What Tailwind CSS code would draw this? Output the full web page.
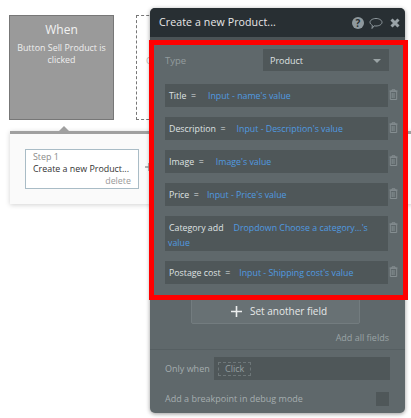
<!DOCTYPE html>
<html><head><meta charset="utf-8">
<script src="https://cdn.jsdelivr.net/npm/@tailwindcss/browser@4"></script>
</head>
<body class="m-0 bg-white">
<div class="relative w-[411px] h-[418px] overflow-hidden bg-white font-['Open_Sans',sans-serif]">
  <!-- dashed placeholder -->
  <div class="absolute left-[136px] top-[15px] w-[105px] h-[105px] border border-dashed border-[#777] text-[9px] leading-[12px] text-[#bbb] pl-[9px] pt-[39px]">C</div>
  <!-- When card -->
  <div class="absolute left-[9px] top-[15px] w-[105px] h-[105px] bg-[#9a9a9a] border border-[#777] flex flex-col items-center">
    <div class="text-[12px] leading-[16px] mt-[6px] text-[#f2f2f2]">When</div>
    <div class="text-[8.9px] leading-[12px] mt-[4px] text-center text-[#eeeeee] w-[100px]">Button Sell Product is clicked</div>
  </div>
  <!-- Step strip -->
  <div class="absolute left-[10px] top-[131px] w-[420px] h-[73px] bg-[#fafafa] border-t-[3px] border-[#a0a0a0] shadow-[0_1px_5px_rgba(0,0,0,0.18)]">
    <div class="ml-[15px] mt-[15px] w-[114px] h-[40px] bg-white border border-[#a9bcc6] px-[7px] flex flex-col text-[8.9px] leading-[12px]">
      <div class="text-[#8a8a8a] mt-[1px]">Step 1</div>
      <div class="text-[#333] whitespace-nowrap">Create a new Product...</div>
      <div class="text-[#999] text-right">delete</div>
    </div>
    <svg class="absolute left-[135px] top-[29px]" width="6" height="8" viewBox="0 0 6 8"><path d="M4 0v8M0 4h6" stroke="#9a9a9a" stroke-width="1.500"/></svg>
  </div>
  <div class="absolute left-[58px] top-[126px] w-0 h-0 border-x-[6px] border-x-transparent border-b-[6px] border-b-[#a0a0a0]"></div>
  <!-- Panel -->
  <div class="absolute left-[150px] top-[8px] w-[255px] h-[405px] rounded-[5px] bg-[#5f686b] shadow-[0_1px_4px_rgba(0,0,0,0.4)] flex flex-col">
    <div class="h-[29px] shrink-0 bg-[#282f33] rounded-t-[5px] flex items-center pl-[9px] pr-[5px]">
      <div class="text-[#e8e8e8] text-[10.6px] tracking-[0.1px] flex-1">Create a new Product...</div>
      <svg width="12" height="12" viewBox="0 0 12 12" class="mr-[5px]"><circle cx="6" cy="6" r="6" fill="#8f999e"/><text x="6" y="9.500" text-anchor="middle" font-size="10" font-weight="700" fill="#282f33" font-family="Open Sans">?</text></svg>
      <svg width="14" height="13" viewBox="0 0 14 13" class="mr-[7px] mt-[2px]"><path d="M7 1.500c3.300 0 6 1.700 6 3.800S10.300 9 7 9c-.6 0-1.200 0-1.800-.2L3 11.500l.4-3.200C1.900 7.600 1 6.500 1 5.300c0-2.100 2.700-3.800 6-3.800z" fill="none" stroke="#8f999e" stroke-width="1"/></svg>
      <svg width="10" height="10" viewBox="0 0 10 10"><path d="M1.500 1.500l7 7M8.500 1.500l-7 7" stroke="#9aa3a8" stroke-width="3"/></svg>
    </div>
    <div class="h-[3px] shrink-0 bg-[#4b5356]"></div>
    <div class="flex-1"></div>
    <div class="shrink-0">
      <div class="ml-[41px] mr-[45px] h-[26px] mb-[8px] bg-[#687174] border border-[#737c7f] rounded-b-[2px] flex items-center pl-[39px] text-[#e6e8e8] text-[10px]">
        <svg width="11" height="11" viewBox="0 0 11 11" class="mr-[8px]"><path d="M5.500 0v11M0 5.500h11" stroke="#eceeee" stroke-width="1.600"/></svg>
        Set another field
      </div>
      <div class="text-right pr-[16px] text-[9px] leading-[12px] text-[#9aa3a5]">Add all fields</div>
      <div class="h-px bg-[#565f62] mt-[5px]"></div>
      <div class="flex items-center mt-[7px] pl-[15px] pr-[15px] h-[23px]">
        <div class="text-[9px] text-[#a5adaf] w-[49px]">Only when</div>
        <div class="flex-1 h-[23px] bg-[#4f5759] flex items-center pl-[4px]">
          <div class="border border-dashed border-[#6d7678] h-[14px] px-[6px] flex items-center text-[9px] text-[#969fa1]">Click</div>
        </div>
      </div>
      <div class="flex items-center justify-between mt-[11px] mb-[7px] pl-[15px] pr-[16px] h-[15px]">
        <div class="text-[9px] text-[#a5adaf]">Add a breakpoint in debug mode</div>
        <div class="w-[13px] h-[14px] bg-[#4f5759]"></div>
      </div>
    </div>
  </div>
  <!-- Red highlighted region -->
  <div class="absolute left-[149px] top-[40px] w-[259px] h-[260px] border-[5px] border-[#ff0000] bg-[#5f686b] px-[11px] pt-[4px] text-[8.8px] leading-[15px]">
    <div class="flex items-center h-[22px] mb-[13px]">
      <div class="w-[98px] pt-px text-[#939c9e] text-[9.5px]">Type</div>
      <div class="w-[126px] h-[22px] bg-[#4f5759] flex items-center justify-between pl-[7px] pr-[8px] pt-px text-[9px] text-[#dfe2e2]">Product
        <span class="w-0 h-0 border-x-[4px] border-x-transparent border-t-[4px] border-t-[#9aa3a5]"></span>
      </div>
    </div>
    <div class="flex flex-col gap-[10px]">
      <div class="relative w-[223px] h-[23px] bg-[#4f5759] flex items-center pl-[4px] pt-px whitespace-nowrap"><span class="text-[#dfe2e2] mr-[12px]">Title &nbsp;=</span><span class="text-[#4f9ae0]">Input - name's value</span>
        <svg class="absolute left-[224px] top-[5px]" width="9" height="11" viewBox="0 0 9 11"><path d="M.5 2h8M3 2V.8h3V2M1.300 2.300h6.400v8.200H1.300zM3.200 4v5M5 4v5" fill="none" stroke="#858e91" stroke-width="1"/></svg></div>
      <div class="relative w-[223px] h-[23px] bg-[#4f5759] flex items-center pl-[4px] pt-px whitespace-nowrap"><span class="text-[#dfe2e2] mr-[11px]">Description &nbsp;=</span><span class="text-[#4f9ae0]">Input - Description's value</span>
        <svg class="absolute left-[224px] top-[5px]" width="9" height="11" viewBox="0 0 9 11"><path d="M.5 2h8M3 2V.8h3V2M1.300 2.300h6.400v8.200H1.300zM3.200 4v5M5 4v5" fill="none" stroke="#858e91" stroke-width="1"/></svg></div>
      <div class="relative w-[223px] h-[23px] bg-[#4f5759] flex items-center pl-[4px] pt-px whitespace-nowrap"><span class="text-[#dfe2e2] mr-[12px]">Image &nbsp;=</span><span class="text-[#4f9ae0]">Image's value</span>
        <svg class="absolute left-[224px] top-[5px]" width="9" height="11" viewBox="0 0 9 11"><path d="M.5 2h8M3 2V.8h3V2M1.300 2.300h6.400v8.200H1.300zM3.200 4v5M5 4v5" fill="none" stroke="#858e91" stroke-width="1"/></svg></div>
      <div class="relative w-[223px] h-[23px] bg-[#4f5759] flex items-center pl-[4px] pt-px whitespace-nowrap"><span class="text-[#dfe2e2] mr-[8px]">Price &nbsp;=</span><span class="text-[#4f9ae0]">Input - Price's value</span>
        <svg class="absolute left-[224px] top-[5px]" width="9" height="11" viewBox="0 0 9 11"><path d="M.5 2h8M3 2V.8h3V2M1.300 2.300h6.400v8.200H1.300zM3.200 4v5M5 4v5" fill="none" stroke="#858e91" stroke-width="1"/></svg></div>
      <div class="relative w-[223px] h-[35px] bg-[#4f5759] pl-[3px] pt-[5px] whitespace-nowrap">
        <div><span class="text-[#dfe2e2] ml-[1px] mr-[10px]">Category add</span><span class="text-[#4f9ae0]">Dropdown Choose a category...'s</span></div>
        <div class="text-[#4f9ae0]">value</div>
        <svg class="absolute left-[224px] top-[6px]" width="9" height="11" viewBox="0 0 9 11"><path d="M.5 2h8M3 2V.8h3V2M1.300 2.300h6.400v8.200H1.300zM3.200 4v5M5 4v5" fill="none" stroke="#858e91" stroke-width="1"/></svg></div>
      <div class="relative w-[223px] h-[23px] bg-[#4f5759] flex items-center pl-[4px] pt-px whitespace-nowrap"><span class="text-[#dfe2e2] mr-[9px]">Postage cost &nbsp;=</span><span class="text-[#4f9ae0]">Input - Shipping cost's value</span>
        <svg class="absolute left-[224px] top-[5px]" width="9" height="11" viewBox="0 0 9 11"><path d="M.5 2h8M3 2V.8h3V2M1.300 2.300h6.400v8.200H1.300zM3.200 4v5M5 4v5" fill="none" stroke="#858e91" stroke-width="1"/></svg></div>
    </div>
  </div>
</div>
</body></html>
